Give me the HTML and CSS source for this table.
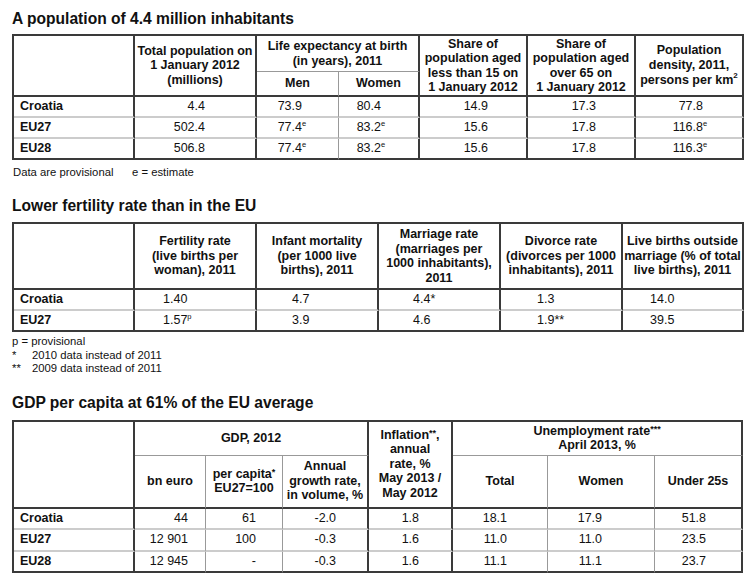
FILE: index.html
```html
<!DOCTYPE html>
<html>
<head>
<meta charset="utf-8">
<link rel="stylesheet" href="styles.css">
</head>
<body>
<div class="page">
  <h2 class="title">A population of 4.4 million inhabitants</h2>
  <table class="t t1">
    <colgroup>
      <col class="w121"><col class="w122"><col class="w82"><col class="w81"><col class="w108"><col class="w108"><col class="w108">
    </colgroup>
    <thead>
      <tr class="r36">
        <th rowspan="2"></th>
        <th rowspan="2">Total population on<br>1 January 2012<br>(millions)</th>
        <th colspan="2" class="subb">Life expectancy at birth<br>(in years), 2011</th>
        <th rowspan="2">Share of<br>population aged<br>less than 15 on<br>1 January 2012</th>
        <th rowspan="2">Share of<br>population aged<br>over 65 on<br>1 January 2012</th>
        <th rowspan="2">Population<br>density, 2011,<br>persons per km<sup class="sq">2</sup></th>
      </tr>
      <tr class="r25">
        <th class="subr">Men</th>
        <th>Women</th>
      </tr>
    </thead>
    <tbody>
      <tr><td>Croatia</td><td>4.4</td><td class="subr">73.9</td><td>80.4</td><td>14.9</td><td>17.3</td><td>77.8</td></tr>
      <tr><td>EU27</td><td>502.4</td><td class="subr">77.4<span class="sup">e</span></td><td>83.2<span class="sup">e</span></td><td>15.6</td><td>17.8</td><td>116.8<span class="sup">e</span></td></tr>
      <tr class="last"><td>EU28</td><td>506.8</td><td class="subr">77.4<span class="sup">e</span></td><td>83.2<span class="sup">e</span></td><td>15.6</td><td>17.8</td><td>116.3<span class="sup">e</span></td></tr>
    </tbody>
  </table>
  <div class="note1"><span class="nl">Data are provisional</span><span>e = estimate</span></div>

  <h2 class="title t2title">Lower fertility rate than in the EU</h2>
  <table class="t t2">
    <colgroup>
      <col class="w121"><col class="w122"><col class="w122"><col class="w122"><col class="w122"><col class="w121">
    </colgroup>
    <thead>
      <tr class="r66">
        <th></th>
        <th>Fertility rate<br>(live births per<br>woman), 2011</th>
        <th>Infant mortality<br>(per 1000 live<br>births), 2011</th>
        <th>Marriage rate<br>(marriages per<br>1000 inhabitants),<br>2011</th>
        <th>Divorce rate<br>(divorces per 1000<br>inhabitants), 2011</th>
        <th>Live births outside<br>marriage (% of total<br>live births), 2011</th>
      </tr>
    </thead>
    <tbody>
      <tr><td>Croatia</td><td>1.40</td><td>4.7</td><td>4.4*</td><td>1.3</td><td>14.0</td></tr>
      <tr class="last"><td>EU27</td><td>1.57<span class="sup">p</span></td><td>3.9</td><td>4.6</td><td>1.9**</td><td>39.5</td></tr>
    </tbody>
  </table>
  <div class="note2">
    <div class="fn"><span class="full">p = provisional</span></div>
    <div class="fn"><span class="mk">*</span><span>2010 data instead of 2011</span></div>
    <div class="fn"><span class="mk">**</span><span>2009 data instead of 2011</span></div>
  </div>

  <h2 class="title t3title">GDP per capita at 61% of the EU average</h2>
  <table class="t t3">
    <colgroup>
      <col class="w121"><col class="w71"><col class="w77"><col class="w86"><col class="w84"><col class="w95"><col class="w107"><col class="w88">
    </colgroup>
    <thead>
      <tr class="r34">
        <th rowspan="2"></th>
        <th colspan="3" class="subb">GDP, 2012</th>
        <th rowspan="2">Inflation<span class="ast">**</span>,<br>annual<br>rate, %<br>May 2013 /<br>May 2012</th>
        <th colspan="3" class="subb">Unemployment rate<span class="ast">***</span><br>April 2013, %</th>
      </tr>
      <tr class="r53">
        <th class="subr">bn euro</th>
        <th class="subr">per capita<span class="ast">*</span><br>EU27=100</th>
        <th>Annual<br>growth rate,<br>in volume, %</th>
        <th class="subr">Total</th>
        <th class="subr">Women</th>
        <th>Under 25s</th>
      </tr>
    </thead>
    <tbody>
      <tr><td>Croatia</td><td class="subr">44</td><td class="subr">61</td><td>-2.0</td><td>1.8</td><td class="subr">18.1</td><td class="subr">17.9</td><td>51.8</td></tr>
      <tr class="r22"><td>EU27</td><td class="subr">12 901</td><td class="subr">100</td><td>-0.3</td><td>1.6</td><td class="subr">11.0</td><td class="subr">11.0</td><td>23.5</td></tr>
      <tr class="last"><td>EU28</td><td class="subr">12 945</td><td class="subr">-</td><td>-0.3</td><td>1.6</td><td class="subr">11.1</td><td class="subr">11.1</td><td>23.7</td></tr>
    </tbody>
  </table>
</div>
</body>
</html>
```
FILE: styles.css
```css
* { box-sizing: border-box; }
body {
  margin: 0;
  background: #fff;
  color: #111;
  font-family: "Liberation Sans", Arial, Helvetica, sans-serif;
}
.page { padding: 10px 0 0 12px; }

.title {
  margin: 0 0 6px;
  font-size: 15.6px;
  line-height: 18px;
  font-weight: bold;
  white-space: nowrap;
}
.t2title { margin-top: 18px; margin-bottom: 7px; }
.t3title { margin-top: 18px; margin-bottom: 8px; }

.t {
  border-collapse: separate;
  border-spacing: 0;
  table-layout: fixed;
  border-top: 2px solid #3a3a3a;
  border-left: 2px solid #3a3a3a;
  font-size: 12.5px;
}
.t1 { width: 732px; }
.t2 { width: 732px; }
.t3 { width: 731px; }

.w121 { width: 121px; } .w122 { width: 122px; } .w82 { width: 82px; }
.w81 { width: 81px; } .w108 { width: 108px; } .w71 { width: 71px; }
.w77 { width: 77px; } .w86 { width: 86px; } .w84 { width: 84px; }
.w95 { width: 95px; } .w107 { width: 107px; } .w88 { width: 88px; }

.t th, .t td {
  padding: 0;
  border-right: 2px solid #3a3a3a;
  border-bottom: 2px solid #ccc;
  white-space: nowrap;
  line-height: 14.5px;
}
.t th {
  font-weight: bold;
  text-align: center;
  vertical-align: middle;
  border-bottom-color: #3a3a3a;
}
.t th.subb { border-bottom: 1px solid #999; }
.t .subr { border-right: 1px solid #999; }
.t tr.last td { border-bottom-color: #3a3a3a; }

.t tr { height: 21px; }
.t tr.r36 { height: 36px; }
.t tr.r25 { height: 25px; }
.t tr.r66 { height: 66px; }
.t tr.r34 { height: 34px; }
.t tr.r53 { height: 53px; }
.t tr.r22 { height: 22px; }

.t td { text-align: right; vertical-align: middle; }
.t td:first-child {
  text-align: left;
  font-weight: bold;
  padding-left: 6px;
}

/* table 1 data alignment */
.t1 td:nth-child(2) { padding-right: 50px; }
.t1 td:nth-child(3) { padding-right: 36px; }
.t1 td:nth-child(4) { padding-right: 37px; }
.t1 td:nth-child(5) { padding-right: 38px; }
.t1 td:nth-child(6) { padding-right: 38px; }
.t1 td:nth-child(7) { padding-right: 39px; }

/* table 2 data alignment */
.t2 td { text-align: left; }
.t2 td:nth-child(2) { padding-left: 28px; }
.t2 td:nth-child(3) { padding-left: 35px; }
.t2 td:nth-child(4) { padding-left: 34px; }
.t2 td:nth-child(5) { padding-left: 36px; }
.t2 td:nth-child(6) { padding-left: 27px; }

/* table 3 data alignment */
.t3 td:nth-child(2) { padding-right: 17px; }
.t3 td:nth-child(3) { padding-right: 26px; }
.t3 td:nth-child(4) { padding-right: 31px; }
.t3 td:nth-child(5) { padding-right: 32px; }
.t3 td:nth-child(6) { padding-right: 40px; }
.t3 td:nth-child(7) { padding-right: 52px; }
.t3 td:nth-child(8) { padding-right: 35px; }

.sup {
  display: inline-block;
  width: 0;
  font-size: 7.5px;
  vertical-align: 5px;
  line-height: 1;
}
.sq {
  font-size: 8px;
  vertical-align: 6px;
  line-height: 1;
}
.ast {
  font-size: 9px;
  vertical-align: 3px;
  line-height: 1;
}

.note1 {
  margin-top: 6px;
  display: flex;
  font-size: 11.3px;
  line-height: 13px;
  padding-left: 1px;
}
.note1 .nl { width: 119px; }

.note2 {
  margin-top: 3px;
  font-size: 11.3px;
  line-height: 13.5px;
}
.fn { display: flex; }
.fn .mk { width: 20px; }
```
